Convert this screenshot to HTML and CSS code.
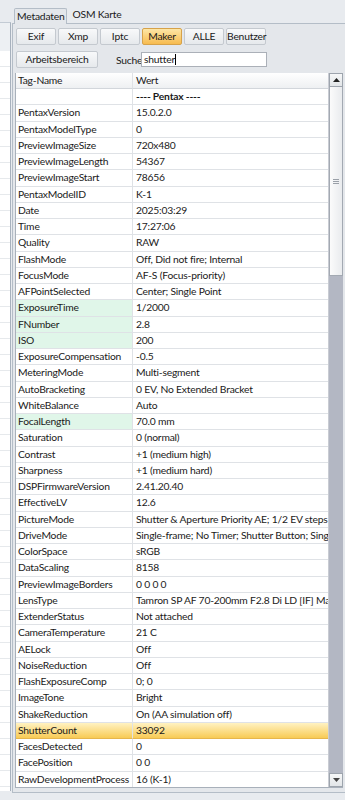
FILE: index.html
```html
<!DOCTYPE html>
<html lang="de">
<head>
    <meta charset="UTF-8">
    <meta name="viewport" content="width=device-width, initial-scale=1.0">
    <title>Metadaten</title>
    <link rel="stylesheet" href="styles.css">
</head>
<body>

<div class="window">
    <!-- cut-off list on the left -->
    <div class="side"></div>

    <div class="main">
        <div class="tabs">
            <div class="tab active">Metadaten</div>
            <div class="tab">OSM Karte</div>
        </div>

        <div class="panel">
            <div class="btn-row">
                <div class="btn">Exif</div>
                <div class="btn">Xmp</div>
                <div class="btn">Iptc</div>
                <div class="btn selected">Maker</div>
                <div class="btn">ALLE</div>
                <div class="btn">Benutzer</div>
            </div>

            <div class="search-row">
                <div class="btn wide">Arbeitsbereich</div>
                <label class="search-label" for="suche">Suche</label>
                <div class="search-input" id="suche">shutter<span class="caret"></span></div>
            </div>

            <div class="grid-wrap">
                <div class="grid">
                    <div class="cell head name">Tag-Name</div>
                    <div class="cell head">Wert</div>

                    <div class="cell name"></div><div class="cell bold">---- Pentax ----</div>
                    <div class="cell name">PentaxVersion</div><div class="cell">15.0.2.0</div>
                    <div class="cell name">PentaxModelType</div><div class="cell">0</div>
                    <div class="cell name">PreviewImageSize</div><div class="cell">720x480</div>
                    <div class="cell name">PreviewImageLength</div><div class="cell">54367</div>
                    <div class="cell name">PreviewImageStart</div><div class="cell">78656</div>
                    <div class="cell name">PentaxModelID</div><div class="cell">K-1</div>
                    <div class="cell name">Date</div><div class="cell">2025:03:29</div>
                    <div class="cell name">Time</div><div class="cell">17:27:06</div>
                    <div class="cell name">Quality</div><div class="cell">RAW</div>
                    <div class="cell name">FlashMode</div><div class="cell">Off, Did not fire; Internal</div>
                    <div class="cell name">FocusMode</div><div class="cell">AF-S (Focus-priority)</div>
                    <div class="cell name">AFPointSelected</div><div class="cell">Center; Single Point</div>
                    <div class="cell name mark">ExposureTime</div><div class="cell">1/2000</div>
                    <div class="cell name mark">FNumber</div><div class="cell">2.8</div>
                    <div class="cell name mark">ISO</div><div class="cell">200</div>
                    <div class="cell name">ExposureCompensation</div><div class="cell">-0.5</div>
                    <div class="cell name">MeteringMode</div><div class="cell">Multi-segment</div>
                    <div class="cell name">AutoBracketing</div><div class="cell">0 EV, No Extended Bracket</div>
                    <div class="cell name">WhiteBalance</div><div class="cell">Auto</div>
                    <div class="cell name mark">FocalLength</div><div class="cell">70.0 mm</div>
                    <div class="cell name">Saturation</div><div class="cell">0 (normal)</div>
                    <div class="cell name">Contrast</div><div class="cell">+1 (medium high)</div>
                    <div class="cell name">Sharpness</div><div class="cell">+1 (medium hard)</div>
                    <div class="cell name">DSPFirmwareVersion</div><div class="cell">2.41.20.40</div>
                    <div class="cell name">EffectiveLV</div><div class="cell">12.6</div>
                    <div class="cell name">PictureMode</div><div class="cell">Shutter &amp; Aperture Priority AE; 1/2 EV steps</div>
                    <div class="cell name">DriveMode</div><div class="cell">Single-frame; No Timer; Shutter Button; Single Exposure</div>
                    <div class="cell name">ColorSpace</div><div class="cell">sRGB</div>
                    <div class="cell name">DataScaling</div><div class="cell">8158</div>
                    <div class="cell name">PreviewImageBorders</div><div class="cell">0 0 0 0</div>
                    <div class="cell name">LensType</div><div class="cell">Tamron SP AF 70-200mm F2.8 Di LD [IF] Macro</div>
                    <div class="cell name">ExtenderStatus</div><div class="cell">Not attached</div>
                    <div class="cell name">CameraTemperature</div><div class="cell">21 C</div>
                    <div class="cell name">AELock</div><div class="cell">Off</div>
                    <div class="cell name">NoiseReduction</div><div class="cell">Off</div>
                    <div class="cell name">FlashExposureComp</div><div class="cell">0; 0</div>
                    <div class="cell name">ImageTone</div><div class="cell">Bright</div>
                    <div class="cell name">ShakeReduction</div><div class="cell">On (AA simulation off)</div>
                    <div class="cell name hit">ShutterCount</div><div class="cell hit">33092</div>
                    <div class="cell name">FacesDetected</div><div class="cell">0</div>
                    <div class="cell name">FacePosition</div><div class="cell">0 0</div>
                    <div class="cell name">RawDevelopmentProcess</div><div class="cell">16 (K-1)</div>
                </div>

                <div class="scrollbar">
                    <div class="arrow">
                        <svg width="7" height="4" viewBox="0 0 7 4"><path d="M0 4 L3.5 0 L7 4 Z" fill="#222"/></svg>
                    </div>
                    <div class="thumb"><span class="grip"></span></div>
                    <div class="track"></div>
                    <div class="arrow">
                        <svg width="7" height="4" viewBox="0 0 7 4"><path d="M0 0 L3.5 4 L7 0 Z" fill="#444"/></svg>
                    </div>
                </div>
            </div>
        </div>
    </div>
</div>

</body>
</html>
```

FILE: styles.css
```css
/* General styles */
* {
    box-sizing: border-box;
    margin: 0;
    padding: 0;
}
body {
    font-family: Lato, "Noto Sans", sans-serif;
    font-size: 10.3px;
    letter-spacing: -0.2px;
    color: #1a1a1a;
    background-color: #e8ebef;
    width: 345px;
    height: 800px;
    overflow: hidden;
}
.window {
    display: flex;
    height: 800px;
}

/* Left list, mostly hidden */
.side {
    width: 11px;
    margin-top: 22px;
    margin-bottom: 9px;
    border-top: 1px solid #c3cbd4;
    border-right: 1px solid #a7b1bd;
    background-color: #fff;
    background-image:
        linear-gradient(#edf0f3, #edf0f3),
        repeating-linear-gradient(#fff 0, #fff 15px, #e6e9ec 15px, #e6e9ec 16px);
    background-size: 100% 28px, 100% 100%;
    background-position: 0 0, 0 28px;
    background-repeat: no-repeat, repeat;
}
.main {
    flex: 1;
    padding-left: 1px;
    display: flex;
    flex-direction: column;
}

/* Tabs */
.tabs {
    height: 23px;
    display: flex;
    align-items: flex-end;
    padding-left: 2px;
}
.tab {
    height: 16px;
    line-height: 15px;
    padding: 0 5px;
}
.tab.active {
    padding: 0 2px;
    background-color: #e4e7eb;
    border: 1px solid #b4bdc7;
    border-bottom: none;
    border-radius: 2px 2px 0 0;
    margin-bottom: -1px;
    position: relative;
}
.panel {
    height: 770px;
    border: 1px solid #b4bdc7;
    border-right: none;
    background-color: #e4e7eb;
    padding: 4px 0 0 2px;
}

/* Buttons */
.btn-row {
    display: flex;
    gap: 2px;
    padding-left: 1px;
}
.btn {
    width: 40px;
    height: 17px;
    line-height: 15px;
    text-align: center;
    border: 1px solid #c4c9cf;
    border-radius: 2px;
    background: linear-gradient(#f8f9fa, #e6e9ec);
}
.btn.selected {
    border-color: #d6a24a;
    background: linear-gradient(#fde6a6, #f7bb4f);
}
.btn.wide {
    width: 82px;
}
.search-row {
    display: flex;
    align-items: center;
    margin-top: 6px;
    padding-left: 1px;
}
.search-label {
    margin-left: 18px;
    width: 25px;
    padding-right: 2px;
    text-align: right;
    white-space: nowrap;
}
.search-input {
    width: 126px;
    height: 15px;
    line-height: 13px;
    padding-left: 2px;
    border: 1px solid #abb0b8;
    background-color: #fff;
}
.caret {
    display: inline-block;
    width: 1px;
    height: 11px;
    background-color: #000;
    vertical-align: -2px;
}

/* Table */
.grid-wrap {
    display: flex;
    margin-top: 5px;
    width: 328px;
    height: 715px;
    border-left: 1px solid #a8b0ba;
    border-bottom: 1px solid #a8b0ba;
}
.grid {
    flex: 1;
    display: grid;
    grid-template-columns: 117px 1fr;
    grid-template-rows: 16px;
    grid-auto-rows: 16.26px;
    background-color: #fff;
    overflow: hidden;
}
.cell {
    padding-left: 3px;
    line-height: 15px;
    white-space: nowrap;
    overflow: hidden;
    border-bottom: 1px solid #dfe2e6;
}
.cell.name {
    padding-left: 2px;
    border-right: 1px solid #dfe2e6;
}
.cell.head {
    background: linear-gradient(#ffffff, #eef0f2);
    border-bottom-color: #d2d6db;
}
.cell.bold {
    font-weight: bold;
}
.cell.mark {
    background-color: #e0f6e9;
}
.cell.hit {
    background: linear-gradient(#fff2c2, #f8cb55);
    border-bottom-color: #e6b64c;
}

/* Scrollbar */
.scrollbar {
    width: 15px;
    display: flex;
    flex-direction: column;
    background-color: #b3b7c3;
    border-left: 1px solid #c9ccd3;
}
.arrow {
    height: 14px;
    display: flex;
    align-items: center;
    justify-content: center;
    border: 1px solid #9da4ad;
    background: linear-gradient(#f6f7f8, #e2e5e8);
}
.thumb {
    height: 189px;
    display: flex;
    align-items: center;
    justify-content: center;
    border: 1px solid #a3a9b2;
    border-top: none;
    background: linear-gradient(90deg, #fbfbfb, #e9ebee);
}
.grip {
    width: 6px;
    height: 5px;
    border-top: 1px solid #9aa0a8;
    border-bottom: 1px solid #9aa0a8;
    background: linear-gradient(transparent 1px, #9aa0a8 1px, #9aa0a8 2px, transparent 2px);
}
.track {
    flex: 1;
}
```
